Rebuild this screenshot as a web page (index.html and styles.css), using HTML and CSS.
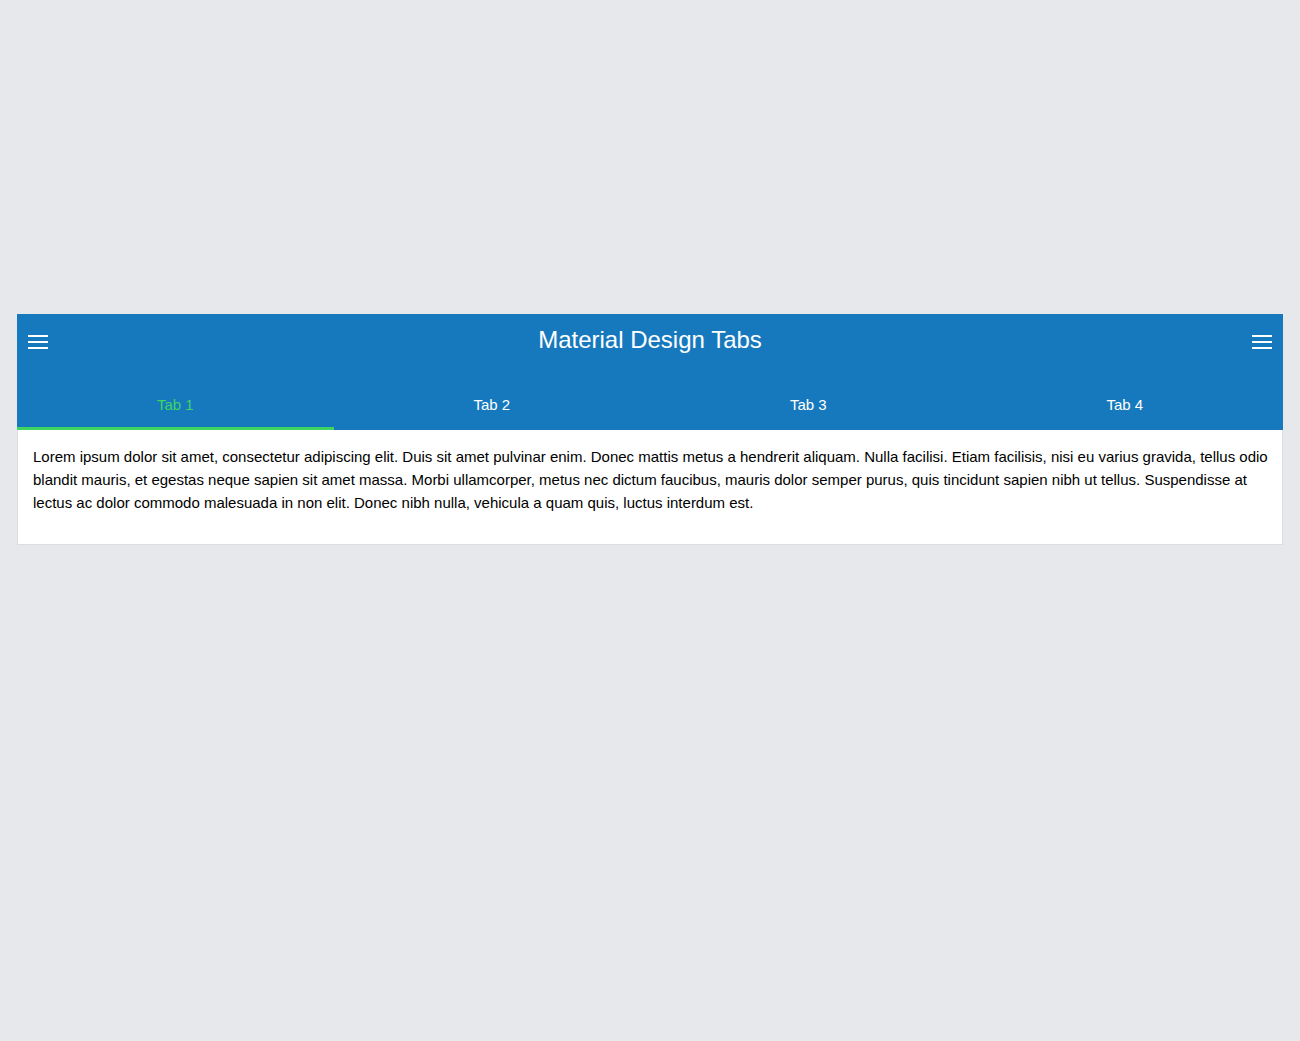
FILE: index.html
```html
<!DOCTYPE html>
<html>
<head>
<meta charset="utf-8">
<link rel="stylesheet" href="styles.css">
</head>
<body>
<div class="card">
  <header class="appbar">
    <div class="toolbar">
      <span class="menu"><svg width="20" height="14" viewBox="0 0 20 14"><rect x="0" y="0" width="20" height="2" fill="#fff"/><rect x="0" y="6" width="20" height="2" fill="#fff"/><rect x="0" y="12" width="20" height="2" fill="#fff"/></svg></span>
      <h1 class="title">Material Design Tabs</h1>
      <span class="menu"><svg width="20" height="14" viewBox="0 0 20 14"><rect x="0" y="0" width="20" height="2" fill="#fff"/><rect x="0" y="6" width="20" height="2" fill="#fff"/><rect x="0" y="12" width="20" height="2" fill="#fff"/></svg></span>
    </div>
    <nav class="tabs">
      <a class="tab active">Tab 1</a>
      <a class="tab">Tab 2</a>
      <a class="tab">Tab 3</a>
      <a class="tab">Tab 4</a>
    </nav>
  </header>
  <section class="content">
    <p>Lorem ipsum dolor sit amet, consectetur adipiscing elit. Duis sit amet pulvinar enim. Donec mattis metus a hendrerit aliquam. Nulla facilisi. Etiam facilisis, nisi eu varius gravida, tellus odio blandit mauris, et egestas neque sapien sit amet massa. Morbi ullamcorper, metus nec dictum faucibus, mauris dolor semper purus, quis tincidunt sapien nibh ut tellus. Suspendisse at lectus ac dolor commodo malesuada in non elit. Donec nibh nulla, vehicula a quam quis, luctus interdum est.</p>
  </section>
</div>
</body>
</html>
```
FILE: styles.css
```css
html, body {
  margin: 0;
  padding: 0;
  background: #e7e8ec;
}
body {
  padding: 314px 17px 0 17px;
  font-family: "Liberation Sans", Arial, Helvetica, sans-serif;
}
.card {
  background: #fff;
  border: 1px solid #dcdde1;
  border-top: none;
}
.appbar {
  background: #1779bd;
  color: #fff;
  margin: 0 -1px;
}
.toolbar {
  height: 52px;
  display: flex;
  align-items: center;
  justify-content: space-between;
  padding: 0 11px 0 11px;
}
.menu {
  display: flex;
  width: 20px;
  height: 14px;
  margin-top: 3px;
}
.title {
  margin: 0;
  font-weight: normal;
  font-size: 24px;
  line-height: 30px;
}
.tabs {
  display: grid;
  grid-template-columns: repeat(4, 1fr);
  height: 64px;
}
.tab {
  display: block;
  text-align: center;
  font-size: 15px;
  line-height: 22px;
  padding-top: 28px;
  box-sizing: border-box;
  height: 64px;
  border-bottom: 3px solid transparent;
  color: #fff;
}
.tab.active {
  color: #3ed562;
  border-bottom-color: #3ed562;
}
.content {
  padding: 15px 6px 30px 15px;
}
.content p {
  margin: 0;
  font-size: 15px;
  line-height: 23px;
  color: #000;
}
```
